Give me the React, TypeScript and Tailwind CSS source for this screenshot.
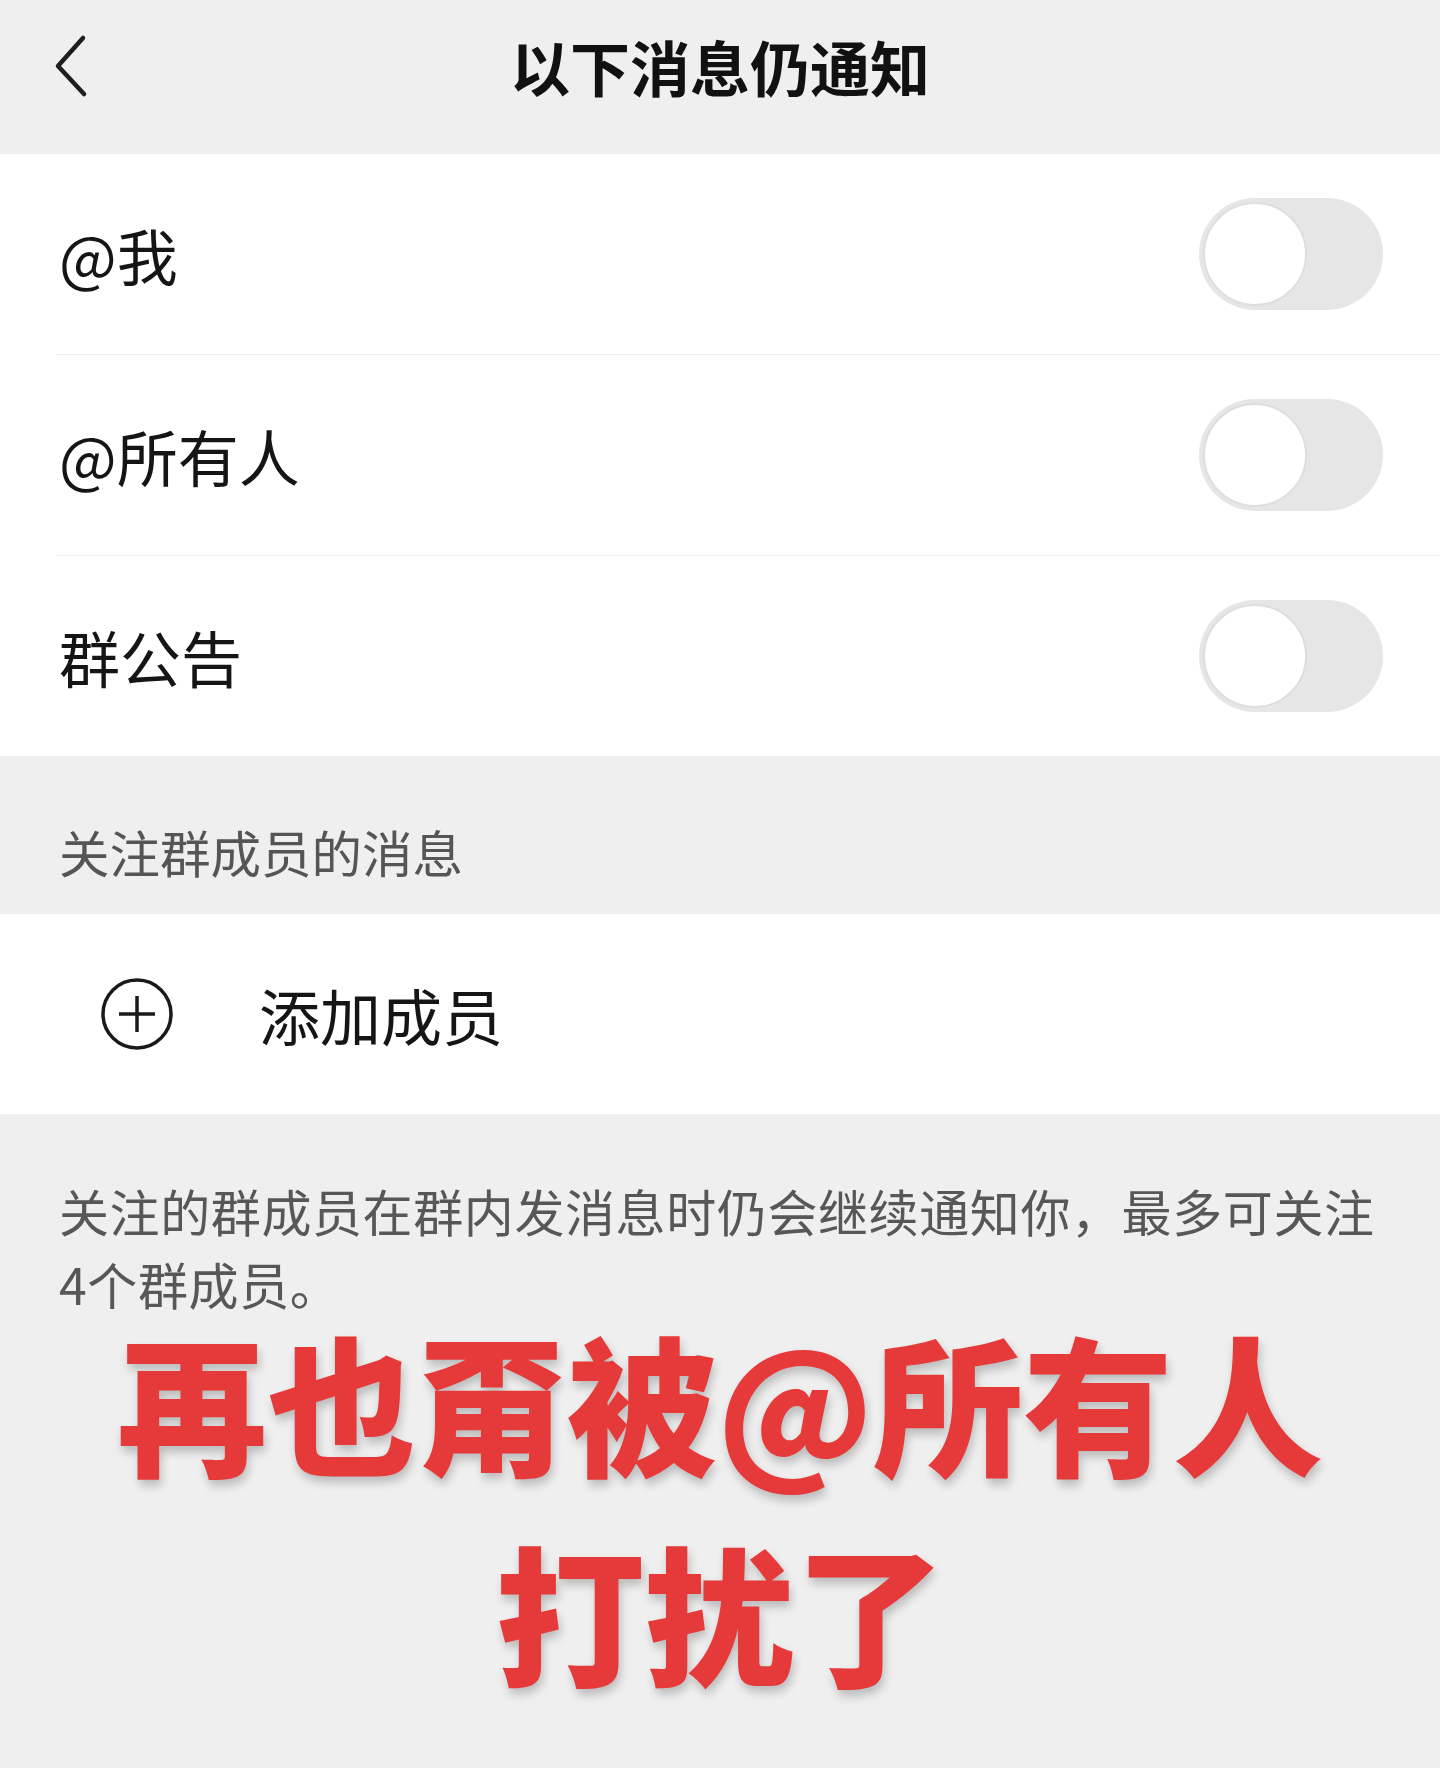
import React from 'react'

const cjk = "font-['Noto_Sans_CJK_SC','Noto_Sans',sans-serif]"

function Toggle() {
  return (
    <div className="w-[184px] h-[112px] rounded-full bg-[#e6e6e6] flex items-center p-[4px] shrink-0">
      <div className="w-[104px] h-[104px] rounded-full bg-white border-[2px] border-[#dedede]" />
    </div>
  )
}

function SwitchRow({ label, last }: { label: string; last?: boolean }) {
  return (
    <div>
      <div className="h-[200px] flex items-center justify-between pl-[59px] pr-[57px]">
        <span className="text-[61px] leading-none text-[#151515]">{label}</span>
        <Toggle />
      </div>
      {!last && <div className="ml-[56px] h-[1px] bg-[#ececec]" />}
    </div>
  )
}

export default function App() {
  return (
    <div className={`w-[1440px] min-h-[1768px] bg-[#efefef] ${cjk}`}>
      {/* header */}
      <div className="h-[154px] pb-[22px] grid grid-cols-[1fr_auto_1fr] items-center">
        <div className="pl-[54px] flex items-center">
          <svg width="36" height="64" viewBox="0 0 36 64" fill="none">
            <path d="M29 4 L4 32 L30 60" stroke="#1e1e1e" strokeWidth="4.5" strokeLinecap="round" strokeLinejoin="round" />
          </svg>
        </div>
        <h1 className="text-[60px] font-bold leading-none text-[#111]">以下消息仍通知</h1>
        <div />
      </div>

      {/* switches */}
      <div className="bg-white">
        <SwitchRow label="@我" />
        <SwitchRow label="@所有人" />
        <SwitchRow label="群公告" last />
      </div>

      {/* section title */}
      <div className="h-[158px] flex items-end pl-[59px] pb-[38px]">
        <span className="text-[50.5px] leading-none text-[#555]">关注群成员的消息</span>
      </div>

      {/* add member */}
      <div className="bg-white h-[200px] flex items-center pl-[101px]">
        <svg width="72" height="72" viewBox="0 0 72 72" fill="none" className="shrink-0">
          <circle cx="36" cy="36" r="34" stroke="#1a1a1a" strokeWidth="3.5" />
          <path d="M18 36 H54 M36 18 V54" stroke="#1a1a1a" strokeWidth="3.5" />
        </svg>
        <span className="ml-[86px] text-[61px] leading-none text-[#151515]">添加成员</span>
      </div>

      {/* description + banner */}
      <div className="pt-[60px] px-[59px] pb-[40px]">
        <p className="text-[50px] leading-[73px] tracking-[0.6px] text-[#575757]">
          关注的群成员在群内发消息时仍会继续通知你，最多可关注4个群成员。
        </p>
        <div className="mt-[5px] flex flex-col items-center gap-[60px] text-[150px] leading-[150px] font-black text-[#e63a3a] [text-shadow:2px_6px_10px_rgba(0,0,0,0.22)]">
          <div>再也甭被@所有人</div>
          <div>打扰了</div>
        </div>
      </div>
    </div>
  )
}
